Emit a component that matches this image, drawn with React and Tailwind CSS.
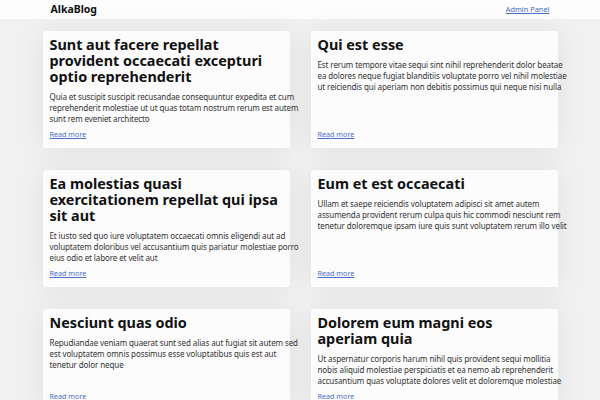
// Body text is kept as the lines the reference shows, so the wrapping matches.
const posts = [
  {
    id: 1,
    title: 'Sunt aut facere repellat provident occaecati excepturi optio reprehenderit',
    body: [
      'Quia et suscipit suscipit recusandae consequuntur expedita et cum',
      'reprehenderit molestiae ut ut quas totam nostrum rerum est autem',
      'sunt rem eveniet architecto',
    ],
  },
  {
    id: 2,
    title: 'Qui est esse',
    body: [
      'Est rerum tempore vitae sequi sint nihil reprehenderit dolor beatae',
      'ea dolores neque fugiat blanditiis voluptate porro vel nihil molestiae',
      'ut reiciendis qui aperiam non debitis possimus qui neque nisi nulla',
    ],
  },
  {
    id: 3,
    title: 'Ea molestias quasi exercitationem repellat qui ipsa sit aut',
    body: [
      'Et iusto sed quo iure voluptatem occaecati omnis eligendi aut ad',
      'voluptatem doloribus vel accusantium quis pariatur molestiae porro',
      'eius odio et labore et velit aut',
    ],
  },
  {
    id: 4,
    title: 'Eum et est occaecati',
    body: [
      'Ullam et saepe reiciendis voluptatem adipisci sit amet autem',
      'assumenda provident rerum culpa quis hic commodi nesciunt rem',
      'tenetur doloremque ipsam iure quis sunt voluptatem rerum illo velit',
    ],
  },
  {
    id: 5,
    title: 'Nesciunt quas odio',
    body: [
      'Repudiandae veniam quaerat sunt sed alias aut fugiat sit autem sed',
      'est voluptatem omnis possimus esse voluptatibus quis est aut',
      'tenetur dolor neque',
    ],
  },
  {
    id: 6,
    title: 'Dolorem eum magni eos aperiam quia',
    body: [
      'Ut aspernatur corporis harum nihil quis provident sequi mollitia',
      'nobis aliquid molestiae perspiciatis et ea nemo ab reprehenderit',
      'accusantium quas voluptate dolores velit et doloremque molestiae',
    ],
  },
]

function PostCard({ post }) {
  return (
    <div className="flex flex-col bg-[#fcfcfc] rounded-[3px] px-[7px] pt-[6px] pb-[8px] shadow-[0_0_30px_rgba(0,0,0,0.07)]">
      <h2 className="text-[14.4px] leading-[16px] font-bold text-[#111111]">{post.title}</h2>
      <p className="mt-[6px] text-[8px] leading-[11px] tracking-[-0.1px] text-[#333333]">
        {post.body.map((line, i) => (
          <span key={i} className="block whitespace-nowrap">{line}</span>
        ))}
      </p>
      <a href="#" className="mt-auto pt-[5px] text-[7.2px] leading-[11px] text-[#4a6fc4] underline">
        Read more
      </a>
    </div>
  )
}

export default function App() {
  return (
    <div className="min-h-[400px] bg-[#f1f1f1] font-['Noto_Sans',sans-serif]">
      <header className="bg-[#fdfdfd] h-[19px]">
        <div className="w-[515px] mx-auto px-[8px] h-full flex items-center justify-between">
          <span className="text-[10.5px] font-bold text-[#111111]">AlkaBlog</span>
          <a href="#" className="text-[7.4px] text-[#4a6fc4] underline">Admin Panel</a>
        </div>
      </header>
      <main className="w-[515px] mx-auto pt-[12px] grid grid-cols-2 gap-x-[21px] gap-y-[22px]">
        {posts.map((p) => (
          <PostCard key={p.id} post={p} />
        ))}
      </main>
    </div>
  )
}
